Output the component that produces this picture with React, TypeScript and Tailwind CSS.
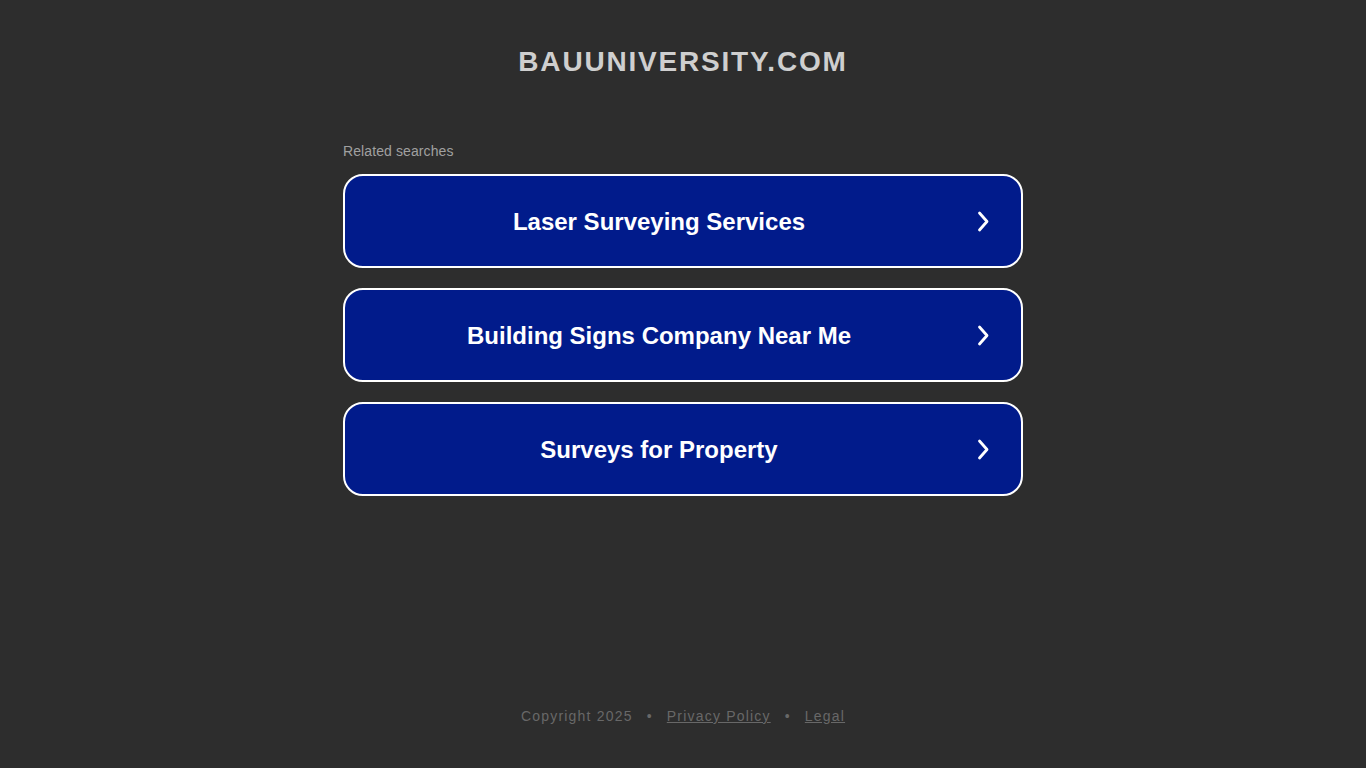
import React from "react";

const items = ["Laser Surveying Services", "Building Signs Company Near Me", "Surveys for Property"];

export default function App() {
  return (
    <div className="min-h-[768px] h-[768px] bg-[#2d2d2d] flex flex-col items-center" style={{ fontFamily: '"Liberation Sans", Arial, sans-serif' }}>
      <h1 className="mt-[44px] text-[28px] leading-[36px] font-bold tracking-[1.8px] text-[#cfcfcf]">BAUUNIVERSITY.COM</h1>
      <div className="w-[680px] mt-[63px]">
        <div className="text-[14px] leading-[16px] tracking-[0.1px] text-[#a0a0a0]">Related searches</div>
        <div className="mt-[15px] flex flex-col gap-[20px]">
          {items.map((t) => (
            <div key={t} className="h-[94px] rounded-[20px] border-2 border-white bg-[#011b8b] flex items-center relative">
              <span className="flex-1 text-center text-[24px] font-bold text-white pr-[48px] pt-[1px]">{t}</span>
              <svg className="absolute right-[31px] top-[34px]" width="14" height="24" viewBox="0 0 14 24" fill="none">
                <path d="M3.5 3 L11 11.5 L3.5 20" stroke="white" strokeWidth="2.8" strokeLinecap="round" strokeLinejoin="round" />
              </svg>
            </div>
          ))}
        </div>
      </div>
      <div className="mt-auto mb-[41px] text-[14px] tracking-[1.2px] text-[#686868] flex gap-[14px]">
        <span>Copyright 2025</span>
        <span>•</span>
        <span className="underline">Privacy Policy</span>
        <span>•</span>
        <span className="underline">Legal</span>
      </div>
    </div>
  );
}
